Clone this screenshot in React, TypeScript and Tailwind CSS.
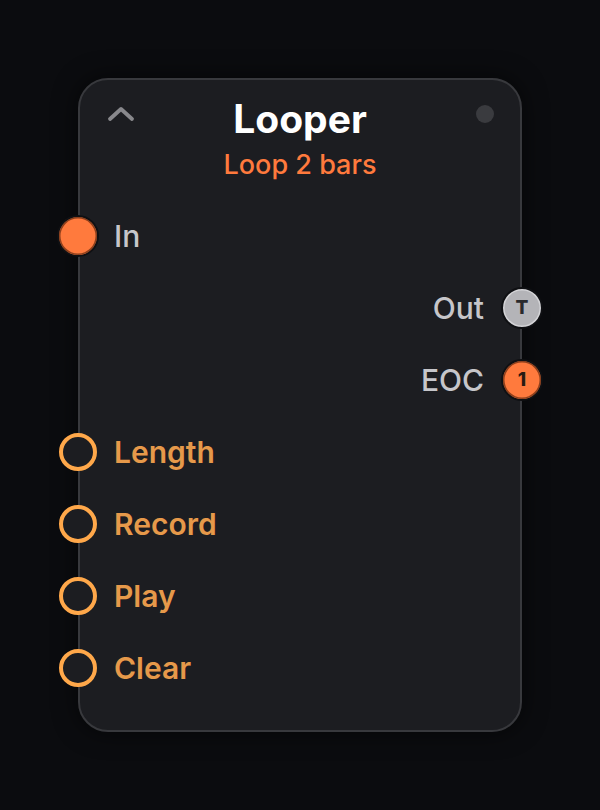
import React from 'react';

type Port = {
  label: string;
  side: 'in' | 'out';
  kind: 'filled' | 'ring' | 'grey' | 'badge';
  glyph?: string;
};

const ports: Port[] = [
  { label: 'In', side: 'in', kind: 'filled' },
  { label: 'Out', side: 'out', kind: 'grey', glyph: 'T' },
  { label: 'EOC', side: 'out', kind: 'badge', glyph: '1' },
  { label: 'Length', side: 'in', kind: 'ring' },
  { label: 'Record', side: 'in', kind: 'ring' },
  { label: 'Play', side: 'in', kind: 'ring' },
  { label: 'Clear', side: 'in', kind: 'ring' },
];

const Dot: React.FC<{ port: Port }> = ({ port }) => {
  if (port.kind === 'filled') {
    return <div className="h-[42px] w-[42px] rounded-full border-2 border-[#0f1013] bg-[#ff7a3d] shadow-[0_0_0_1.5px_#8f401c_inset]" />;
  }
  if (port.kind === 'ring') {
    return <div className="h-[38px] w-[38px] rounded-full border-4 border-[#ffa84a] bg-[#1c1d21]" />;
  }
  if (port.kind === 'grey') {
    return (
      <div className="flex h-[42px] w-[42px] items-center justify-center rounded-full border-2 border-[#0f1013] bg-[#b4b4b8] shadow-[0_0_0_1.5px_#d4d4d7_inset] text-[19px] font-extrabold text-[#2a2a2d]">
        {port.glyph}
      </div>
    );
  }
  return (
    <div className="flex h-[42px] w-[42px] items-center justify-center rounded-full border-2 border-[#0f1013] bg-[#ff7a3d] shadow-[0_0_0_1.5px_#8f401c_inset] text-[19px] font-extrabold text-[#2a1a12]">
      {port.glyph}
    </div>
  );
};

const Row: React.FC<{ port: Port }> = ({ port }) => {
  const isInput = port.side === 'in';
  const labelColor = port.kind === 'ring' ? 'text-[#e6994a] font-semibold' : 'text-[#c6c6ca] font-medium';
  return (
    <div className={`relative flex h-[72px] items-center ${isInput ? 'justify-start pl-[34px]' : 'justify-end pr-[36px]'}`}>
      <div
        className={`absolute top-1/2 -translate-y-1/2 ${
          isInput ? (port.kind === 'ring' ? 'left-[-21px]' : 'left-[-23px]') : 'right-[-23px]'
        }`}
      >
        <Dot port={port} />
      </div>
      <span className={`text-[30px] leading-none ${labelColor}`}>{port.label}</span>
    </div>
  );
};

const App: React.FC = () => {
  return (
    <div className="flex min-h-screen items-center justify-center bg-[#0b0c0f]" style={{ fontFamily: 'Inter, "Noto Sans", sans-serif' }}>
      <div className="relative h-[654px] w-[444px] rounded-[30px] border-2 border-[#38393d] bg-[#1c1d21] shadow-[0_0_24px_rgba(0,0,0,0.6)]">
        <div className="relative flex h-[120px] flex-col items-center pt-[16px]">
          <svg className="absolute left-[27px] top-[26px]" width="28" height="16" viewBox="0 0 28 16" fill="none">
            <path d="M3 13 L14 3 L25 13" stroke="#88888c" strokeWidth="3.8" strokeLinecap="round" strokeLinejoin="round" />
          </svg>
          <div className="absolute right-[26px] top-[25px] h-[18px] w-[18px] rounded-full bg-[#3a3b3f]" />
          <div className="text-[39px] font-bold leading-[46px] text-white">Looper</div>
          <div className="mt-[7px] text-[27px] font-medium leading-[32px] text-[#ff7a3d]">Loop 2 bars</div>
        </div>
        <div className="flex flex-col">
          {ports.map((p) => (
            <Row key={p.label} port={p} />
          ))}
        </div>
      </div>
    </div>
  );
};

export default App;
